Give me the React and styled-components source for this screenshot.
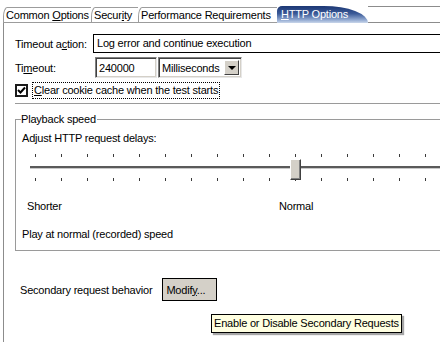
import React from "react";
import styled, { createGlobalStyle } from "styled-components";

const Global = createGlobalStyle`
  html, body {
    margin: 0;
    padding: 0;
    background: #ffffff;
    overflow: hidden;
  }
  body {
    font-family: "Liberation Sans", Arial, sans-serif;
    font-size: 11px;
    letter-spacing: -0.2px;
    color: #000;
  }
`;

const Page = styled.div`
  width: 440px;
  height: 342px;
  overflow: hidden;
  position: relative;
`;

const TabStrip = styled.div`
  display: flex;
  align-items: flex-end;
  height: 23px;
  padding-left: 3px;
`;

const Tab = styled.div`
  flex: none;
  width: ${(p) => p.$w}px;
  height: 16px;
  box-sizing: border-box;
  border-top: 1px solid #9c9c9c;
  border-left: 1px solid #9c9c9c;
  border-bottom: 1px solid #9c9c9c;
  border-top-left-radius: 4px 10px;
  padding-left: 2px;
  line-height: 15px;
  white-space: nowrap;
  background: #fff;
`;

const ActiveTab = styled.div`
  flex: none;
  width: 91px;
  height: 17px;
  box-sizing: border-box;
  padding-left: 4px;
  line-height: 17px;
  color: #fff;
  white-space: nowrap;
  background: linear-gradient(#1c3774 0%, #3a5a98 45%, #8ea6cf 80%, #c9d6ea 100%);
  border-radius: 5px 44px 0 0 / 5px 17px 0 0;
`;

const TabFill = styled.div`
  flex: 1;
  height: 17px;
  box-sizing: border-box;
  border-top: 1px solid #8c8c8c;
  border-bottom: 1px solid #8c8c8c;
`;

const Panel = styled.div`
  margin-left: 3px;
  width: 470px;
  height: 319px;
  box-sizing: border-box;
  border-left: 1px solid #8c8c8c;
  padding: 11px 0 0 11px;
`;

const FieldRow = styled.div`
  display: flex;
  align-items: center;
  height: ${(p) => p.$h}px;
  margin-bottom: ${(p) => p.$mb || 0}px;
`;

const Label = styled.span`
  width: ${(p) => p.$w}px;
  flex: none;
`;

const TextBox = styled.div`
  flex: none;
  width: ${(p) => p.$w}px;
  height: ${(p) => p.$h}px;
  box-sizing: border-box;
  border: 1px solid #000;
  border-right: none;
  padding-left: 3px;
  line-height: ${(p) => p.$h - 2}px;
`;

const SunkenBox = styled.div`
  flex: none;
  display: flex;
  align-items: center;
  width: ${(p) => p.$w}px;
  height: 21px;
  box-sizing: border-box;
  border: 1px solid;
  border-color: #808080 #e8e8e8 #e8e8e8 #808080;
  box-shadow: inset 1px 1px 0 #404040, inset -1px -1px 0 #d4d0c8;
  padding-left: 3px;
  margin-left: ${(p) => p.$ml || 0}px;
`;

const DropButton = styled.span`
  margin-left: auto;
  margin-right: 2px;
  width: 15px;
  height: 15px;
  box-sizing: border-box;
  background: #d4d0c8;
  border: 1px solid;
  border-color: #fff #404040 #404040 #fff;
  display: flex;
  align-items: center;
  justify-content: center;
`;

const Arrow = styled.span`
  width: 0;
  height: 0;
  border-left: 4px solid transparent;
  border-right: 4px solid transparent;
  border-top: 4px solid #000;
`;

const CheckRow = styled.div`
  display: flex;
  align-items: center;
  height: 17px;
  margin-top: 4px;
`;

const CheckBox = styled.span`
  width: 13px;
  height: 13px;
  box-sizing: border-box;
  border: 2px solid #1a1a1a;
  background: #fff;
  display: flex;
  align-items: center;
  justify-content: center;
  margin-right: 4px;
`;

const FocusLabel = styled.span`
  border: 1px dotted #000;
  padding: 1px 1px 1px 1px;
  line-height: 13px;
`;

const Separator = styled.div`
  margin-top: 4px;
  height: 0;
  border-top: 1px solid #9a9a9a;
`;

const Group = styled.fieldset`
  margin: 9px 0 0 0;
  padding: 0 0 0 6px;
  height: 138px;
  box-sizing: border-box;
  border: 1px solid #9a9a9a;
  border-right: none;
`;

const Legend = styled.legend`
  padding: 0 1px 0 0;
  margin-left: -1px;
  line-height: 13px;
`;

const Line = styled.div`
  line-height: 13px;
  margin-top: ${(p) => p.$mt || 0}px;
  padding-left: ${(p) => p.$pl || 0}px;
`;

const Slider = styled.div`
  position: relative;
  margin-top: 9px;
  height: 28px;
`;

const Ticks = styled.div`
  height: 3px;
  margin-left: 13px;
  background: repeating-linear-gradient(
    90deg,
    #3a3a3a 0px,
    #3a3a3a 1px,
    transparent 1px,
    transparent 26px
  );
  margin-top: ${(p) => p.$mt || 0}px;
`;

const Track = styled.div`
  margin: 9px 0 0 8px;
  height: 3px;
  box-sizing: border-box;
  border-top: 2px solid #5a5a5a;
  border-bottom: 1px solid #c8c8c8;
`;

const Thumb = styled.div`
  position: absolute;
  left: 268px;
  top: 5px;
  width: 11px;
  height: 21px;
  box-sizing: border-box;
  background: #d4d0c8;
  border: 1px solid;
  border-color: #fff #404040 #404040 #fff;
  box-shadow: inset -1px -1px 0 #808080;
`;

const ScaleLabels = styled.div`
  display: flex;
  margin-top: 18px;
  line-height: 13px;
  padding-left: 5px;
`;

const ScaleLabel = styled.span`
  width: ${(p) => p.$w}px;
`;

const BottomRow = styled.div`
  display: flex;
  align-items: center;
  margin-top: 27px;
  padding-left: 5px;
  gap: 10px;
`;

const Button = styled.button`
  font: inherit;
  letter-spacing: inherit;
  color: #000;
  background: #d4d0c8;
  border: 1px solid #000;
  width: 55px;
  height: 23px;
  padding: 0 0 0 3px;
  text-align: left;
  margin: 0;
`;

const Tooltip = styled.div`
  position: absolute;
  left: 211px;
  top: 314px;
  background: #ffffe1;
  border: 1px solid #000;
  padding: 0 2px;
  line-height: 17px;
  box-shadow: 2px 2px 1px rgba(0, 0, 0, 0.35);
  white-space: nowrap;
`;

const U = styled.u`
  text-decoration: underline;
  text-underline-offset: 1px;
`;

export default function App() {
  return (
    <Page>
      <Global />
      <TabStrip>
        <Tab $w={88}>
          Common <U>O</U>ptions
        </Tab>
        <Tab $w={47}>
          Secur<U>i</U>ty
        </Tab>
        <Tab $w={139}>Performance Requirements</Tab>
        <ActiveTab>
          <U>H</U>TTP Options
        </ActiveTab>
        <TabFill />
      </TabStrip>
      <Panel>
        <FieldRow $h={19} $mb={4}>
          <Label $w={78}>
            Timeout a<U>c</U>tion:
          </Label>
          <TextBox $w={360} $h={19}>
            Log error and continue execution
          </TextBox>
        </FieldRow>
        <FieldRow $h={21}>
          <Label $w={80}>
            Ti<U>m</U>eout:
          </Label>
          <SunkenBox $w={62}>240000</SunkenBox>
          <SunkenBox $w={84} $ml={1}>
            Milliseconds
            <DropButton>
              <Arrow />
            </DropButton>
          </SunkenBox>
        </FieldRow>
        <CheckRow>
          <CheckBox>
            <svg width="9" height="9" viewBox="0 0 9 9">
              <path d="M1 4 L3.5 6.5 L8 1.5" fill="none" stroke="#000" strokeWidth="2" />
            </svg>
          </CheckBox>
          <FocusLabel>
            <U>C</U>lear cookie cache when the test starts
          </FocusLabel>
        </CheckRow>
        <Separator />
        <Group>
          <Legend>Playback speed</Legend>
          <Line $mt={6}>
            Ad<U>j</U>ust HTTP request delays:
          </Line>
          <Slider>
            <Ticks />
            <Track />
            <Ticks $mt={9} />
            <Thumb />
          </Slider>
          <ScaleLabels>
            <ScaleLabel $w={252}>Shorter</ScaleLabel>
            <ScaleLabel>Normal</ScaleLabel>
          </ScaleLabels>
          <Line $mt={15}>Play at normal (recorded) speed</Line>
        </Group>
        <BottomRow>
          <span>Secondary request behavior</span>
          <Button>
            Modif<U>y</U>...
          </Button>
        </BottomRow>
      </Panel>
      <Tooltip>Enable or Disable Secondary Requests</Tooltip>
    </Page>
  );
}
